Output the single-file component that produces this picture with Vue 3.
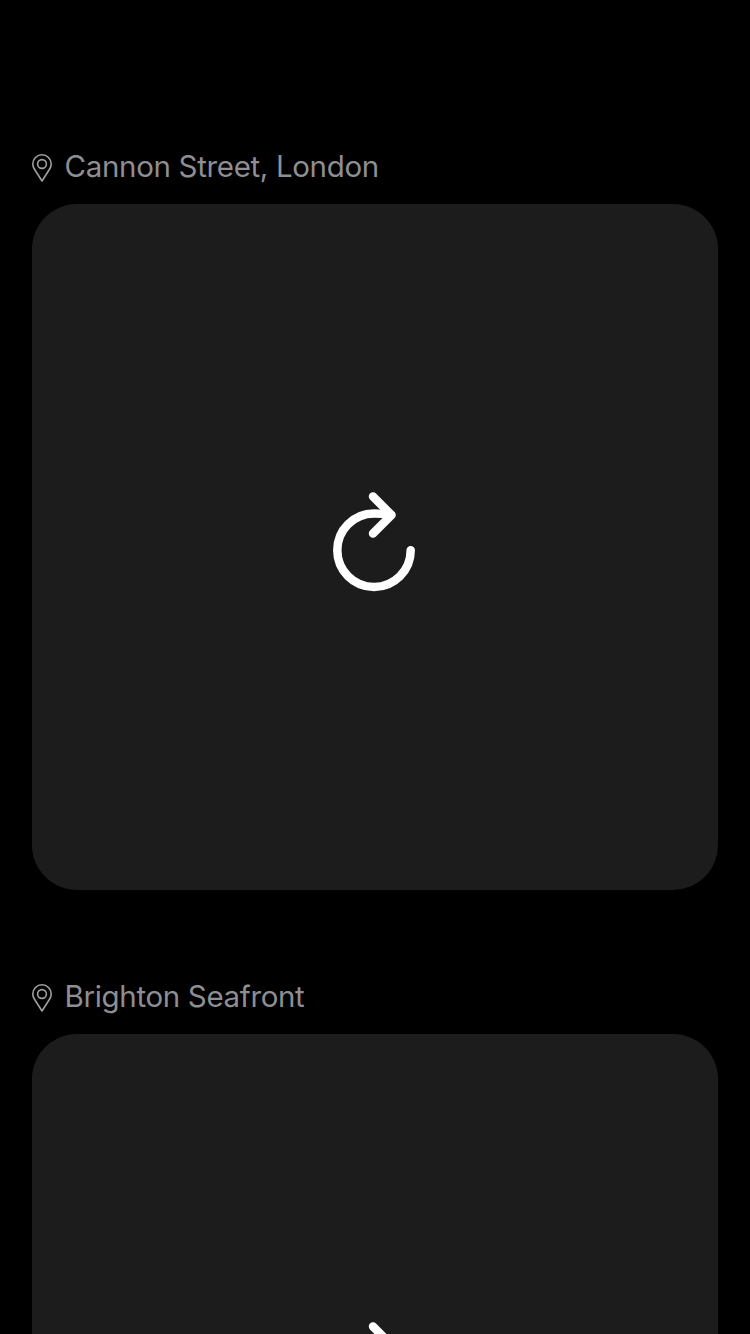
<script setup>
const places = [
  { id: 'cannon', name: 'Cannon Street, London' },
  { id: 'brighton', name: 'Brighton Seafront' },
]
</script>

<template>
  <main class="feed">
    <section v-for="place in places" :key="place.id" class="place">
      <header class="location">
        <svg class="pin" viewBox="0 0 20 28" aria-hidden="true">
          <path d="M10 27L2.2 14.8C1.3 13.2 .8 11.7 .8 10A9.2 9.2 0 0 1 19.2 10C19.2 11.7 18.7 13.2 17.8 14.8Z" />
          <circle cx="10" cy="10" r="4.4" />
        </svg>
        <span class="name">{{ place.name }}</span>
      </header>
      <button class="card" type="button" aria-label="Reload">
        <svg class="reload" viewBox="0 0 84 100" aria-hidden="true">
          <path d="M78.7 58.3A36.7 36.7 0 1 1 42 21.6Q52 21.6 59 23.1" />
          <path d="M41 4.5L59.5 23.1L41 41.5" />
        </svg>
      </button>
    </section>
  </main>
</template>

<style>
body {
  background: #000;
}
</style>

<style scoped>
.feed {
  box-sizing: border-box;
  height: 1334px;
  overflow: hidden;
  padding: 144px 32px 0;
  background: #000;
  font-family: Inter, "Liberation Sans", sans-serif;
}
.place {
  margin-bottom: 84px;
}
.location {
  display: flex;
  align-items: center;
  height: 46px;
  margin-bottom: 14px;
  gap: 12.6px;
  color: #8e8e93;
}
.pin {
  width: 20px;
  height: 28px;
  margin-top: 2px;
  fill: none;
  stroke: #a0a0a2;
  stroke-width: 1.6;
  stroke-linejoin: round;
}
.name {
  margin-top: -2px;
  font-size: 29.5px;
  line-height: 46px;
  letter-spacing: -0.34px;
  white-space: nowrap;
}
.card {
  display: flex;
  align-items: center;
  justify-content: center;
  width: 686px;
  height: 686px;
  padding: 0;
  border: 0;
  border-radius: 45px;
  background: #1c1c1c;
}
.reload {
  width: 84px;
  height: 100px;
  margin: -11px 2px 0 0;
  fill: none;
  stroke: #fff;
  stroke-width: 8.5;
  stroke-linecap: round;
  stroke-linejoin: round;
}
</style>
